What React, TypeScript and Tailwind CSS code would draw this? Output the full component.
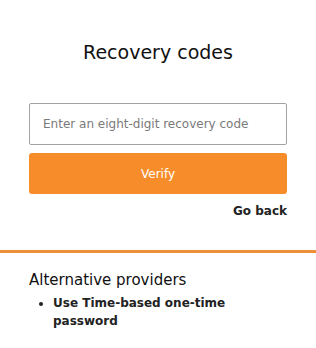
import React from "react";

export default function App() {
  return (
    <div className="w-[316px] h-[348px] bg-white text-black" style={{ fontFamily: '"DejaVu Sans", Verdana, sans-serif' }}>
      <div className="px-[29px]">
        <h1 className="text-center text-[19px] leading-[24px] pt-[40px] font-normal text-[#111]">Recovery codes</h1>
        <input
          className="mt-[39px] block h-[42px] w-full border border-[#a3a3a3] rounded-[2px] px-[13px] text-[12px] outline-none placeholder:text-[#7a7a7a]"
          placeholder="Enter an eight-digit recovery code"
        />
        <button className="mt-[8px] block h-[41px] w-full rounded-[3px] bg-[#f78d2a] text-white text-[12px]">Verify</button>
        <div className="mt-[9px] text-right text-[12px] leading-[16px] font-bold text-[#222]">Go back</div>
      </div>
      <div className="mt-[31px] h-[3px] bg-[#ec8f38]" />
      <div className="px-[29px]">
        <h2 className="mt-[16px] text-[15px] leading-[22px] text-[#111]">Alternative providers</h2>
        <ul className="mt-[3px] list-disc pl-[24px] text-[12px] leading-[18px] font-bold text-[#222]">
          <li>Use Time-based one-time password</li>
        </ul>
      </div>
    </div>
  );
}
